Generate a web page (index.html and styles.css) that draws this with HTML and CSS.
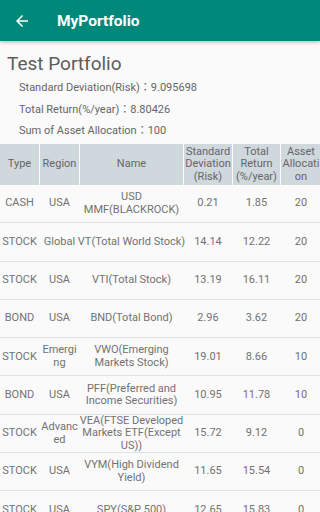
FILE: index.html
```html
<!DOCTYPE html>
<html>
<head>
<meta charset="utf-8">
<link rel="stylesheet" href="styles.css">
</head>
<body>
<header class="appbar">
  <svg class="back" viewBox="0 0 24 24" width="18" height="18"><path d="M20 11H7.83l5.59-5.59L12 4l-8 8 8 8 1.41-1.41L7.83 13H20v-2z" fill="#fff"/></svg>
  <span class="title">MyPortfolio</span>
</header>
<main class="content">
  <h1 class="pname">Test Portfolio</h1>
  <p class="info">Standard Deviation(Risk)：9.095698</p>
  <p class="info">Total Return(%/year)：8.80426</p>
  <p class="info">Sum of Asset Allocation：100</p>
  <div class="table">
    <div class="row head">
      <div class="c">Type</div>
      <div class="c">Region</div>
      <div class="c">Name</div>
      <div class="c">Standard<br>Deviation<br>(Risk)</div>
      <div class="c">Total<br>Return<br>(%/year)</div>
      <div class="c">Asset<br>Allocati<br>on</div>
    </div>
    <div class="row">
      <div class="c">CASH</div><div class="c">USA</div><div class="c">USD<br>MMF(BLACKROCK)</div><div class="c">0.21</div><div class="c">1.85</div><div class="c">20</div>
    </div>
    <div class="row">
      <div class="c">STOCK</div><div class="c">Global</div><div class="c">VT(Total World Stock)</div><div class="c">14.14</div><div class="c">12.22</div><div class="c">20</div>
    </div>
    <div class="row">
      <div class="c">STOCK</div><div class="c">USA</div><div class="c">VTI(Total Stock)</div><div class="c">13.19</div><div class="c">16.11</div><div class="c">20</div>
    </div>
    <div class="row">
      <div class="c">BOND</div><div class="c">USA</div><div class="c">BND(Total Bond)</div><div class="c">2.96</div><div class="c">3.62</div><div class="c">20</div>
    </div>
    <div class="row">
      <div class="c">STOCK</div><div class="c">Emergi<br>ng</div><div class="c">VWO(Emerging<br>Markets Stock)</div><div class="c">19.01</div><div class="c">8.66</div><div class="c">10</div>
    </div>
    <div class="row">
      <div class="c">BOND</div><div class="c">USA</div><div class="c">PFF(Preferred and<br>Income Securities)</div><div class="c">10.95</div><div class="c">11.78</div><div class="c">10</div>
    </div>
    <div class="row">
      <div class="c">STOCK</div><div class="c">Advanc<br>ed</div><div class="c">VEA(FTSE Developed<br>Markets ETF(Except<br>US))</div><div class="c">15.72</div><div class="c">9.12</div><div class="c">0</div>
    </div>
    <div class="row">
      <div class="c">STOCK</div><div class="c">USA</div><div class="c">VYM(High Dividend<br>Yield)</div><div class="c">11.65</div><div class="c">15.54</div><div class="c">0</div>
    </div>
    <div class="row">
      <div class="c">STOCK</div><div class="c">USA</div><div class="c">SPY(S&amp;P 500)</div><div class="c">12.65</div><div class="c">15.83</div><div class="c">0</div>
    </div>
  </div>
</main>
</body>
</html>
```
FILE: styles.css
```css
html, body {
  margin: 0;
  padding: 0;
}
body {
  width: 320px;
  height: 512px;
  overflow: hidden;
  background: #fafafa;
  font-family: Roboto, "Noto Sans CJK JP", sans-serif;
  color: #666;
}
.appbar {
  height: 41px;
  background: #00897b;
  display: flex;
  align-items: center;
  box-shadow: 0 1px 4px rgba(0,0,0,0.3);
  position: relative;
  z-index: 2;
}
.back {
  margin-left: 13px;
  flex: none;
}
.title {
  margin-left: 26px;
  color: #fff;
  font-weight: 700;
  font-size: 15.5px;
}
.content {
  padding-top: 10.5px;
}
.pname {
  margin: 0 0 1.75px 7px;
  font-weight: 400;
  font-size: 19px;
  line-height: 24px;
  color: #5c5c5c;
}
.info {
  margin: 0 0 0 19px;
  font-size: 11px;
  line-height: 21.5px;
  color: #666;
}
.table {
  margin-top: 2.25px;
  width: 321px;
}
.row {
  display: grid;
  grid-template-columns: 39px 39px 103px 48px 47px 40px;
  column-gap: 1px;
  height: 38.3px;
  box-sizing: border-box;
  border-bottom: 1px solid #e2e2e2;
  font-size: 11px;
  line-height: 12.5px;
  color: #727272;
}
.row.head {
  height: 41px;
  border-bottom: none;
  color: #666;
}
.row.head .c {
  background: #cfd8dc;
  overflow: hidden;
}
.c {
  display: flex;
  align-items: center;
  justify-content: center;
  text-align: center;
  white-space: nowrap;
  min-width: 0;
}
```
